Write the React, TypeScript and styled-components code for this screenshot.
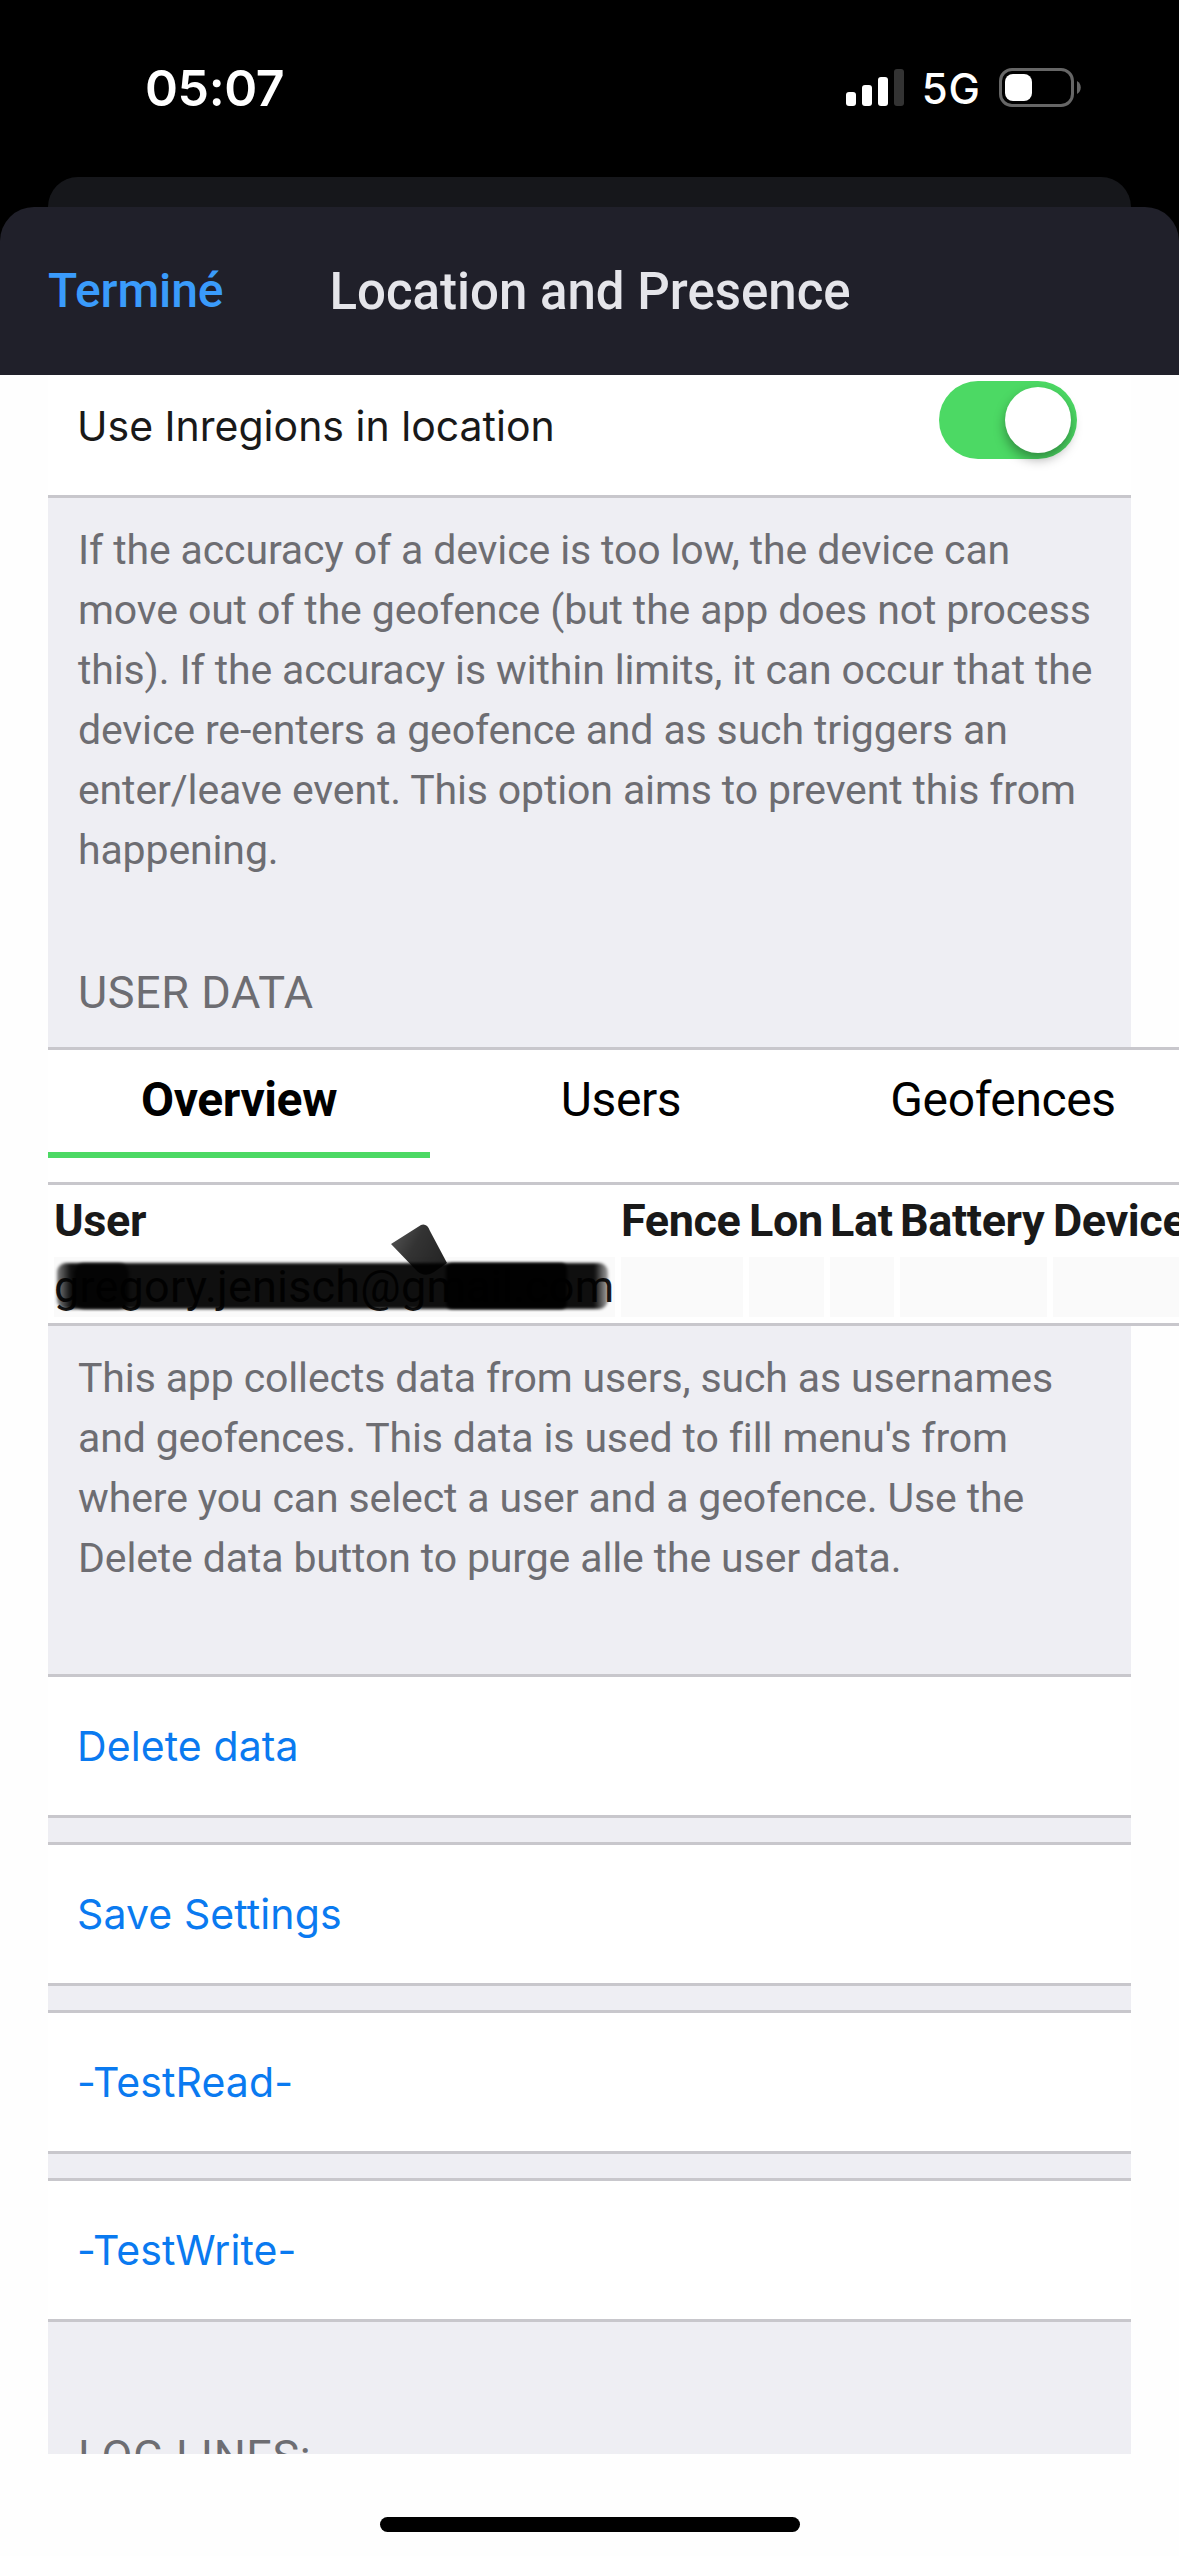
import React from "react";
import styled, { createGlobalStyle, css } from "styled-components";

const roboto = `Roboto, "Liberation Sans", sans-serif`;
const inter = `Inter, "Liberation Sans", sans-serif`;
const line = "#c8c7cc";
const panel = "#eeeef3";
const green = "#4cd964";

const GlobalStyle = createGlobalStyle`
  * { box-sizing: border-box; }
  body { margin: 0; background: #fefefe; }
  button { appearance: none; margin: 0; background: none; border: 0; }
`;

const Screen = styled.main`
  display: flex;
  flex-direction: column;
  width: 1179px;
  height: 2556px;
  overflow: hidden;
  background: #fefefe;
  font-family: ${roboto};
`;

const Top = styled.div`
  display: flex;
  flex-direction: column;
  background: #000;
`;

const StatusBar = styled.header`
  display: flex;
  justify-content: space-between;
  align-items: center;
  height: 177px;
  padding: 0 98px 2px 145px;
  color: #fff;
  font-family: ${inter};
`;

const Clock = styled.span`
  font-size: 50px;
  line-height: 60px;
  letter-spacing: -0.4px;
  font-weight: 600;
`;

const StatusIcons = styled.div`
  display: flex;
  align-items: center;
  height: 60px;
`;

const Network = styled.span`
  margin: 3px 18px 0 18px;
  font-size: 42px;
  line-height: 60px;
  letter-spacing: 1px;
  font-weight: 500;
`;

const BackSheet = styled.div`
  height: 30px;
  margin: 0 48px;
  border-radius: 30px 30px 0 0;
  background: #16171b;
`;

const SheetHeader = styled.div`
  display: grid;
  grid-template-columns: 1fr auto 1fr;
  align-items: center;
  height: 168px;
  padding: 0 48px;
  border-radius: 34px 34px 0 0;
  background: #20202a;
`;

const DoneButton = styled.button`
  justify-self: start;
  padding: 0 0 1px;
  font: 500 48px/60px ${roboto};
  letter-spacing: -0.1px;
  color: #3a9bfb;
`;

const SheetTitle = styled.h1`
  margin: 0;
  padding: 2px 0 0 1px;
  font: 500 51px/60px ${roboto};
  color: #e5e5ea;
`;

const Content = styled.div`
  height: 2079px;
  padding: 0 48px;
  overflow: hidden;
`;

const ToggleRow = styled.label`
  display: flex;
  justify-content: space-between;
  align-items: center;
  height: 144px;
  margin-top: -21px;
  padding: 0 54px 0 29px;
  border-bottom: 3px solid ${line};
  background: #fff;
  font: 400 41px/60px ${inter};
  color: #191919;
`;

const ToggleLabel = styled.span`
  padding-top: 3px;
`;

const Switch = styled.span`
  display: flex;
  justify-content: flex-end;
  width: 138px;
  height: 78px;
  margin-bottom: 9px;
  padding: 6px;
  border-radius: 39px;
  background: ${green};
`;

const Knob = styled.span`
  width: 66px;
  height: 66px;
  border-radius: 50%;
  background: #fff;
  box-shadow: 0 6px 12px rgba(0, 0, 0, 0.36);
`;

const Panel = styled.section<{ $height: number; $top: number }>`
  height: ${(p) => p.$height}px;
  padding: ${(p) => p.$top}px 0 0 30px;
  background: ${panel};
  color: #6d6d72;
`;

const Note = styled.p`
  margin: 0;
  font-size: 41px;
  line-height: 60px;
  letter-spacing: -0.13px;
  white-space: pre-line;
`;

const SectionTitle = styled.h2<{ $gap: number }>`
  margin: ${(p) => p.$gap}px 0 0;
  font-size: 45px;
  font-weight: 400;
  line-height: 60px;
  letter-spacing: 0.6px;
`;

const Wide = styled.div`
  width: 1146px;
  border-top: 3px solid ${line};
  border-bottom: 3px solid ${line};
  background: #fff;
`;

const Tabs = styled.nav`
  display: grid;
  grid-template-columns: repeat(3, 382px);
  height: 135px;
  border-bottom: 3px solid ${line};
`;

const Tab = styled.button<{ $active?: boolean }>`
  height: 108px;
  padding: 0 0 2px;
  border-bottom: 6px solid transparent;
  font: 400 48px/100px ${roboto};
  letter-spacing: -0.4px;
  color: #000;
  ${(p) =>
    p.$active &&
    css`
      border-color: ${green};
      font-weight: 700;
    `}
`;

const Table = styled.div`
  display: grid;
  grid-template-columns: 561px 122px 75px 64px 147px 147px;
  grid-template-rows: 60px 60px;
  gap: 6px;
  padding: 6px;
  font-size: 45px;
  line-height: 60px;
  color: #191919;
`;

const HeadCell = styled.div`
  font-weight: 700;
  letter-spacing: -0.4px;
  white-space: nowrap;
`;

const Cell = styled.div`
  position: relative;
  background: #fafafa;
  letter-spacing: 0.2px;
`;

const Marker = styled.svg`
  position: absolute;
  left: -6px;
  top: -40px;
  pointer-events: none;
`;

const ActionRow = styled.button`
  display: block;
  width: 100%;
  height: 144px;
  padding: 0 0 0 29px;
  border-top: 3px solid ${line};
  border-bottom: 3px solid ${line};
  background: #fff;
  font: 400 41px/138px ${inter};
  letter-spacing: 0.1px;
  text-align: left;
  color: #0a7af0;
`;

const Gap = styled.div`
  height: 24px;
  background: ${panel};
`;

const HomeArea = styled.footer`
  display: flex;
  justify-content: center;
  padding-top: 63px;
`;

const HomeBar = styled.div`
  width: 420px;
  height: 15px;
  border-radius: 8px;
  background: #000;
`;

const note1 = `If the accuracy of a device is too low, the device can
move out of the geofence (but the app does not process
this). If the accuracy is within limits, it can occur that the
device re-enters a geofence and as such triggers an
enter/leave event. This option aims to prevent this from
happening.`;

const note2 = `This app collects data from users, such as usernames
and geofences. This data is used to fill menu's from
where you can select a user and a geofence. Use the
Delete data button to purge alle the user data.`;

const actions = ["Delete data", "Save Settings", "-TestRead-", "-TestWrite-"];
const columns = ["User", "Fence", "Lon", "Lat", "Battery", "Device"];

const Signal = () => (
  <svg width="58" height="38" viewBox="0 0 58 38">
    <rect x="0" y="23" width="10" height="14" rx="3" fill="#fff" />
    <rect x="16" y="16" width="10" height="21" rx="3" fill="#fff" />
    <rect x="32" y="8" width="10" height="29" rx="3" fill="#fff" />
    <rect x="48" y="0" width="10" height="37" rx="3" fill="#333" />
  </svg>
);

const Battery = () => (
  <svg width="82" height="39" viewBox="0 0 82 39">
    <rect x="1.5" y="1.5" width="72" height="36" rx="11.5" fill="none" stroke="#666" strokeWidth="3" />
    <rect x="6" y="6" width="27" height="27" rx="8" fill="#fff" />
    <path d="M78 13c5 2.500 5 10.500 0 13z" fill="#666" />
  </svg>
);

const Scribble = () => (
  <Marker width="575" height="104" viewBox="48 1217 575 104">
    <defs>
      <filter id="soft" x="-10%" y="-20%" width="120%" height="140%">
        <feGaussianBlur stdDeviation="1.500" />
      </filter>
      <linearGradient id="ends" x1="0" x2="1" y1="0" y2="0">
        <stop offset="0" stopColor="#000" stopOpacity=".5" />
        <stop offset=".025" stopColor="#000" stopOpacity=".94" />
        <stop offset=".975" stopColor="#000" stopOpacity=".94" />
        <stop offset="1" stopColor="#000" stopOpacity=".35" />
      </linearGradient>
      <linearGradient id="wedge" x1="0" x2="1" y1="0" y2=".5">
        <stop offset="0" stopColor="#000" stopOpacity=".65" />
        <stop offset=".5" stopColor="#000" stopOpacity=".8" />
        <stop offset="1" stopColor="#000" stopOpacity=".85" />
      </linearGradient>
    </defs>
    <rect x="57" y="1263" width="551" height="46" rx="9" fill="url(#ends)" filter="url(#soft)" />
    <g filter="url(#soft)" fill="#000">
      <rect x="74" y="1263" width="55" height="46" rx="10" opacity=".7" />
      <rect x="446" y="1263" width="121" height="46" rx="6" opacity=".93" />
    </g>
    <path d="M391 1244L421 1225Q427 1223 430 1231L447 1263L434 1272Q425 1278 417 1271Z" fill="url(#wedge)" />
  </Marker>
);

export default function App() {
  return (
    <>
      <GlobalStyle />
      <Screen>
        <Top>
          <StatusBar>
            <Clock>05:07</Clock>
            <StatusIcons>
              <Signal />
              <Network>5G</Network>
              <Battery />
            </StatusIcons>
          </StatusBar>
          <BackSheet />
          <SheetHeader>
            <DoneButton>Terminé</DoneButton>
            <SheetTitle>Location and Presence</SheetTitle>
          </SheetHeader>
        </Top>
        <Content>
          <ToggleRow>
            <ToggleLabel>Use Inregions in location</ToggleLabel>
            <Switch>
              <Knob />
            </Switch>
          </ToggleRow>
          <Panel $height={549} $top={22}>
            <Note>{note1}</Note>
            <SectionTitle $gap={83}>USER DATA</SectionTitle>
          </Panel>
          <Wide>
            <Tabs>
              <Tab $active>Overview</Tab>
              <Tab>Users</Tab>
              <Tab>Geofences</Tab>
            </Tabs>
            <Table>
              {columns.map((name) => (
                <HeadCell key={name}>{name}</HeadCell>
              ))}
              <Cell>
                gregory.jenisch@gmail.com
                <Scribble />
              </Cell>
              {columns.slice(1).map((name) => (
                <Cell key={name} />
              ))}
            </Table>
          </Wide>
          <Panel $height={348} $top={22}>
            <Note>{note2}</Note>
          </Panel>
          {actions.map((label, i) => (
            <React.Fragment key={label}>
              {i > 0 && <Gap />}
              <ActionRow>{label}</ActionRow>
            </React.Fragment>
          ))}
          <Panel $height={200} $top={105}>
            <SectionTitle $gap={0}>LOG LINES:</SectionTitle>
          </Panel>
        </Content>
        <HomeArea>
          <HomeBar />
        </HomeArea>
      </Screen>
    </>
  );
}
